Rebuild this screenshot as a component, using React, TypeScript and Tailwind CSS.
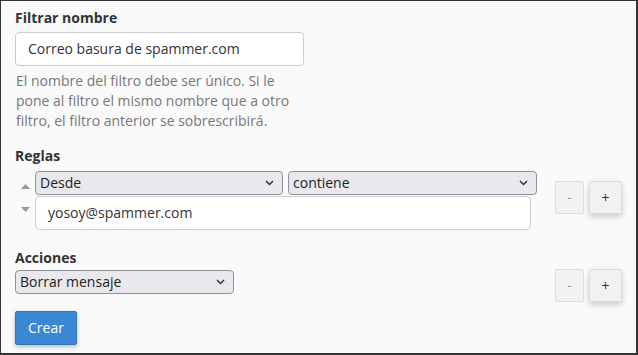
import React from 'react';

/**
 * FilterForm — cPanel-style "create filter" form: name, rules, actions.
 */
function Chevron() {
  return (
    <svg width="9" height="6" viewBox="0 0 9 6" className="shrink-0">
      <path d="M1 1l3.5 3.5L8 1" fill="none" stroke="#333" strokeWidth="1.5" />
    </svg>
  );
}

function FakeSelect({ label, className }: { label: string; className: string }) {
  return (
    <div
      className={`flex h-[24px] items-center justify-between rounded-[4px] border border-[#8f8f9d] bg-[#e9e9ed] pl-[4px] pr-[8px] text-[#222] ${className}`}
    >
      <span>{label}</span>
      <Chevron />
    </div>
  );
}

function PlusMinus({ className = '' }: { className?: string }) {
  return (
    <div className={`flex gap-[5px] ${className}`}>
      <button className="flex h-[33px] w-[29px] items-center justify-center rounded-[2px] border border-[#dcdcdc] bg-[#f1f1f1] text-[12px] text-[#888]">
        -
      </button>
      <button className="flex h-[33px] w-[33px] items-center justify-center rounded-[2px] border border-[#dcdcdc] bg-[#f1f1f1] text-[14px] text-[#333] shadow-[0_3px_6px_rgba(0,0,0,0.18)]">
        +
      </button>
    </div>
  );
}

export default function App() {
  return (
    <div className="h-[355px] w-[638px] border-t border-l border-r-2 border-b-2 border-[#333] bg-[#fafafa] pl-[14px] pt-[7px] text-[14px] leading-[20px] text-[#333] font-['Open_Sans',sans-serif]">
      <label className="block font-bold">Filtrar nombre</label>
      <div className="mt-[4px] flex h-[34px] w-[289px] items-center rounded-[4px] border border-[#ccc] bg-white px-[12px]">
        Correo basura de spammer.com
      </div>
      <p className="mt-[5px] w-[290px] pl-[1px] text-[#777]">
        El nombre del filtro debe ser único. Si le pone al filtro el mismo nombre que a otro filtro, el
        filtro anterior se sobrescribirá.
      </p>

      <label className="mt-[15px] block font-bold">Reglas</label>
      <div className="mt-[5px] flex">
        <div className="flex w-[20px] flex-col items-center pl-[1px] pt-[13px]">
          <svg width="9" height="5" viewBox="0 0 9 5">
            <path d="M0 5L4.5 0 9 5z" fill="#999" />
          </svg>
          <svg width="9" height="5" viewBox="0 0 9 5" className="mt-[18px]">
            <path d="M0 0l4.5 5L9 0z" fill="#999" />
          </svg>
        </div>
        <div className="flex flex-col">
          <div className="flex gap-[5px]">
            <FakeSelect label="Desde" className="w-[248px]" />
            <FakeSelect label="contiene" className="w-[249px]" />
          </div>
          <div className="mt-[1px] flex h-[34px] w-[496px] items-center rounded-[4px] border border-[#ccc] bg-white px-[12px] pb-[1px]">
            yosoy@spammer.com
          </div>
        </div>
        <PlusMinus className="ml-[18px] mt-[10px]" />
      </div>

      <label className="mt-[18px] block font-bold">Acciones</label>
      <div className="flex">
        <FakeSelect label="Borrar mensaje" className="mt-[2px] w-[219px]" />
        <PlusMinus className="ml-[321px] mt-[1px]" />
      </div>

      <button className="mt-[9px] flex h-[34px] w-[62px] items-center justify-center rounded-[2px] border border-[#2f76bb] bg-[#3a87d3] text-white shadow-[0_2px_4px_rgba(0,0,0,0.25)]">
        Crear
      </button>
    </div>
  );
}
